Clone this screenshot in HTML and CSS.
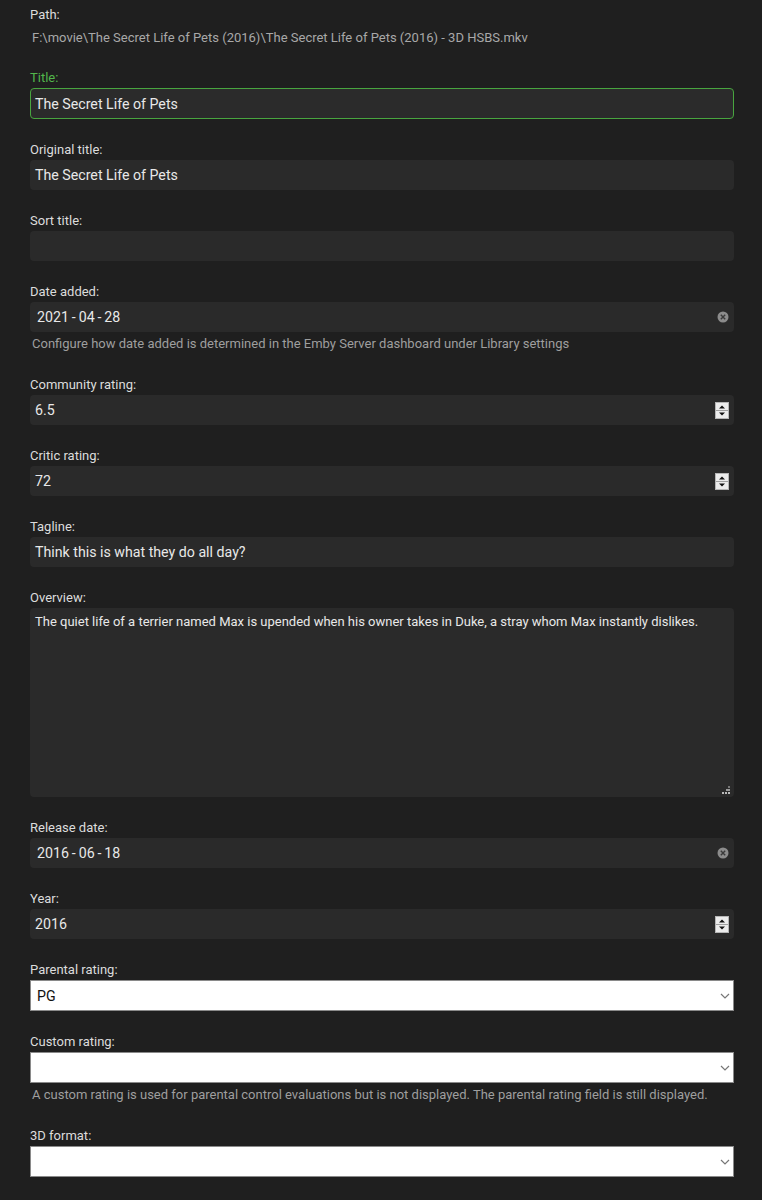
FILE: index.html
```html
<!DOCTYPE html>
<html>
<head>
<meta charset="utf-8">
<link rel="stylesheet" href="styles.css">
</head>
<body>
<div class="form">
  <div class="path-block">
    <div class="label">Path:</div>
    <div class="path-value">F:\movie\The Secret Life of Pets (2016)\The Secret Life of Pets (2016) - 3D HSBS.mkv</div>
  </div>

  <div class="field">
    <div class="label label-focus">Title:</div>
    <div class="box box-focus"><span class="val">The Secret Life of Pets</span></div>
  </div>

  <div class="field">
    <div class="label">Original title:</div>
    <div class="box"><span class="val">The Secret Life of Pets</span></div>
  </div>

  <div class="field">
    <div class="label">Sort title:</div>
    <div class="box"><span class="val"></span></div>
  </div>

  <div class="field">
    <div class="label">Date added:</div>
    <div class="box"><span class="val date">2021 - 04 - 28</span>
      <svg class="clear" width="12" height="12" viewBox="0 0 12 12"><circle cx="6" cy="6" r="5.5" fill="#8c8c8c"/><path d="M3.8 3.8 L8.2 8.2 M8.2 3.8 L3.8 8.2" stroke="#3a3a3a" stroke-width="1.4"/></svg>
    </div>
    <div class="help">Configure how date added is determined in the Emby Server dashboard under Library settings</div>
  </div>

  <div class="field">
    <div class="label">Community rating:</div>
    <div class="box"><span class="val">6.5</span>
      <svg class="spin" width="14" height="17" viewBox="0 0 14 17"><rect x="0.5" y="0.5" width="13" height="16" fill="#ececec" stroke="#b5b5b5"/><line x1="1" y1="8.5" x2="13" y2="8.5" stroke="#a0a0a0"/><path d="M4 6.5 L7 3.5 L10 6.5 Z" fill="#111"/><path d="M4 10.5 L7 13.5 L10 10.5 Z" fill="#111"/></svg>
    </div>
  </div>

  <div class="field">
    <div class="label">Critic rating:</div>
    <div class="box"><span class="val">72</span>
      <svg class="spin" width="14" height="17" viewBox="0 0 14 17"><rect x="0.5" y="0.5" width="13" height="16" fill="#ececec" stroke="#b5b5b5"/><line x1="1" y1="8.5" x2="13" y2="8.5" stroke="#a0a0a0"/><path d="M4 6.5 L7 3.5 L10 6.5 Z" fill="#111"/><path d="M4 10.5 L7 13.5 L10 10.5 Z" fill="#111"/></svg>
    </div>
  </div>

  <div class="field">
    <div class="label">Tagline:</div>
    <div class="box"><span class="val">Think this is what they do all day?</span></div>
  </div>

  <div class="field">
    <div class="label">Overview:</div>
    <div class="box textarea"><span class="val overview">The quiet life of a terrier named Max is upended when his owner takes in Duke, a stray whom Max instantly dislikes.</span>
      <svg class="resize" width="8" height="8" viewBox="0 0 8 8"><rect x="6" y="0" width="2" height="2" fill="#777"/><rect x="4" y="3" width="2" height="2" fill="#999"/><rect x="6" y="3" width="2" height="2" fill="#999"/><rect x="0" y="6" width="2" height="2" fill="#bbb"/><rect x="3" y="6" width="2" height="2" fill="#bbb"/><rect x="6" y="6" width="2" height="2" fill="#bbb"/></svg>
    </div>
  </div>

  <div class="field">
    <div class="label">Release date:</div>
    <div class="box"><span class="val date">2016 - 06 - 18</span>
      <svg class="clear" width="12" height="12" viewBox="0 0 12 12"><circle cx="6" cy="6" r="5.5" fill="#8c8c8c"/><path d="M3.8 3.8 L8.2 8.2 M8.2 3.8 L3.8 8.2" stroke="#3a3a3a" stroke-width="1.4"/></svg>
    </div>
  </div>

  <div class="field">
    <div class="label">Year:</div>
    <div class="box"><span class="val">2016</span>
      <svg class="spin" width="14" height="17" viewBox="0 0 14 17"><rect x="0.5" y="0.5" width="13" height="16" fill="#ececec" stroke="#b5b5b5"/><line x1="1" y1="8.5" x2="13" y2="8.5" stroke="#a0a0a0"/><path d="M4 6.5 L7 3.5 L10 6.5 Z" fill="#111"/><path d="M4 10.5 L7 13.5 L10 10.5 Z" fill="#111"/></svg>
    </div>
  </div>

  <div class="field">
    <div class="label">Parental rating:</div>
    <div class="select"><span class="sel-val">PG</span>
      <svg class="chev" width="10" height="6" viewBox="0 0 10 6"><path d="M1 1 L5 5 L9 1" fill="none" stroke="#777" stroke-width="1.2"/></svg>
    </div>
  </div>

  <div class="field">
    <div class="label">Custom rating:</div>
    <div class="select"><span class="sel-val"></span>
      <svg class="chev" width="10" height="6" viewBox="0 0 10 6"><path d="M1 1 L5 5 L9 1" fill="none" stroke="#777" stroke-width="1.2"/></svg>
    </div>
    <div class="help">A custom rating is used for parental control evaluations but is not displayed. The parental rating field is still displayed.</div>
  </div>

  <div class="field">
    <div class="label">3D format:</div>
    <div class="select"><span class="sel-val"></span>
      <svg class="chev" width="10" height="6" viewBox="0 0 10 6"><path d="M1 1 L5 5 L9 1" fill="none" stroke="#777" stroke-width="1.2"/></svg>
    </div>
  </div>
</div>
</body>
</html>
```

FILE: styles.css
```css
html, body {
  margin: 0;
  padding: 0;
  background: #1f1f1f;
}
body {
  font-family: Roboto, "Liberation Sans", sans-serif;
  color: #e0e0e0;
}
.form {
  width: 704px;
  padding: 7px 28px 20px 30px;
  display: flex;
  flex-direction: column;
}
.path-block {
  margin-bottom: 25px;
}
.path-block .label {
  margin-bottom: 8px;
}
.label {
  font-size: 13px;
  line-height: 15px;
  color: #dcdcdc;
  margin-bottom: 3px;
}
.label-focus {
  color: #52b54b;
}
.path-value {
  font-size: 13px;
  line-height: 15px;
  color: #a8a8a8;
  padding-left: 2px;
}
.field {
  margin-bottom: 23px;
}
.box {
  height: 30px;
  box-sizing: border-box;
  background: #2a2a2a;
  border-radius: 4px;
  display: flex;
  align-items: center;
  padding: 0 5px;
  position: relative;
}
.box-focus {
  height: 31px;
  border: 1px solid #48a53f;
  background: #2b2b2b;
  padding: 0 4px;
}
.val {
  flex: 1;
  font-size: 14.2px;
  color: #e8e8e8;
}
.val.date {
  padding-left: 2px;
  word-spacing: -0.6px;
}
.textarea {
  height: 189px;
  align-items: flex-start;
  padding-top: 6px;
}
.overview {
  font-size: 13px;
  line-height: 15px;
}
.resize {
  position: absolute;
  right: 4px;
  bottom: 3px;
}
.help {
  font-size: 13px;
  line-height: 15px;
  color: #9e9e9e;
  padding: 4px 0 3px 2px;
}
.select {
  height: 31px;
  box-sizing: border-box;
  background: #ffffff;
  border: 1px solid #8a8a8a;
  display: flex;
  align-items: center;
  padding: 0 3px 0 6px;
}
.sel-val {
  flex: 1;
  font-size: 14.2px;
  color: #111;
}
```
